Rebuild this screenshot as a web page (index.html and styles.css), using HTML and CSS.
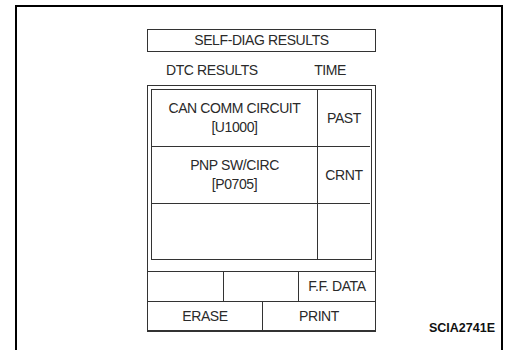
FILE: index.html
```html
<!DOCTYPE html>
<html lang="en">

<head>
    <meta charset="UTF-8">
    <title>Self-diag results</title>
    <link rel="stylesheet" href="styles.css">
</head>

<body>

    <div class="frame">
        <div class="screen">
            <div class="title">SELF-DIAG RESULTS</div>
            <div class="heads">
                <span class="head-dtc">DTC RESULTS</span>
                <span class="head-time">TIME</span>
            </div>
            <div class="panel">
                <div class="dtc-table">
                    <div class="dtc">CAN COMM CIRCUIT<br>[U1000]</div>
                    <div class="time">PAST</div>
                    <div class="dtc">PNP SW/CIRC<br>[P0705]</div>
                    <div class="time">CRNT</div>
                    <div class="dtc last"></div>
                    <div class="time last"></div>
                </div>
                <div class="keys three">
                    <div class="key"></div>
                    <div class="key"></div>
                    <div class="key">F.F. DATA</div>
                </div>
                <div class="keys two">
                    <div class="key">ERASE</div>
                    <div class="key">PRINT</div>
                </div>
            </div>
        </div>
        <div class="code">SCIA2741E</div>
    </div>

</body>

</html>
```

FILE: styles.css
```css
* {
    margin: 0;
    padding: 0;
    box-sizing: border-box;
}

html,
body {
    height: 100%;
    overflow: hidden;
    background: #fff;
    color: #2a2a2a;
    font-family: "Liberation Sans", Arial, sans-serif;
}

.frame {
    display: flex;
    align-items: flex-start;
    margin: 5px 0 0 15px;
    width: 488px;
    height: 345px;
    padding: 22px 0 0 130px;
    border-top: 2px solid #000;
    border-left: 2px solid #000;
    border-right: 2px solid #000;
}

.screen {
    width: 229px;
    font-size: 14px;
    letter-spacing: -0.4px;
}

.title {
    height: 23px;
    line-height: 21px;
    text-align: center;
    border: 1px solid #333;
}

.heads {
    display: flex;
    height: 16px;
    line-height: 16px;
    margin: 10px 0 7px;
    padding: 0 30px 0 19px;
}

.head-time {
    margin-left: auto;
}

.panel {
    border: 1px solid #333;
    border-bottom-width: 2px;
}

.dtc-table {
    display: grid;
    grid-template-columns: 166px 52px;
    grid-template-rows: 57px 57px 55px;
    margin: 3px 3px 11px;
    border: 1px solid #333;
}

.dtc,
.time {
    display: flex;
    align-items: center;
    justify-content: center;
    text-align: center;
    line-height: 19px;
    border-bottom: 1px solid #333;
}

.dtc {
    border-right: 1px solid #333;
}

.last {
    border-bottom: none;
}

.keys {
    display: grid;
    height: 30px;
    border-top: 1px solid #333;
}

.three {
    grid-template-columns: 76px 75px 1fr;
}

.two {
    grid-template-columns: 115px 1fr;
    height: 29px;
}

.key {
    line-height: 29px;
    text-align: center;
    border-right: 1px solid #333;
}

.key:last-child {
    border-right: none;
}

.code {
    align-self: flex-end;
    margin: 0 6px 15px auto;
    font-size: 12.5px;
    font-weight: bold;
    line-height: 14px;
    color: #111;
}
```
